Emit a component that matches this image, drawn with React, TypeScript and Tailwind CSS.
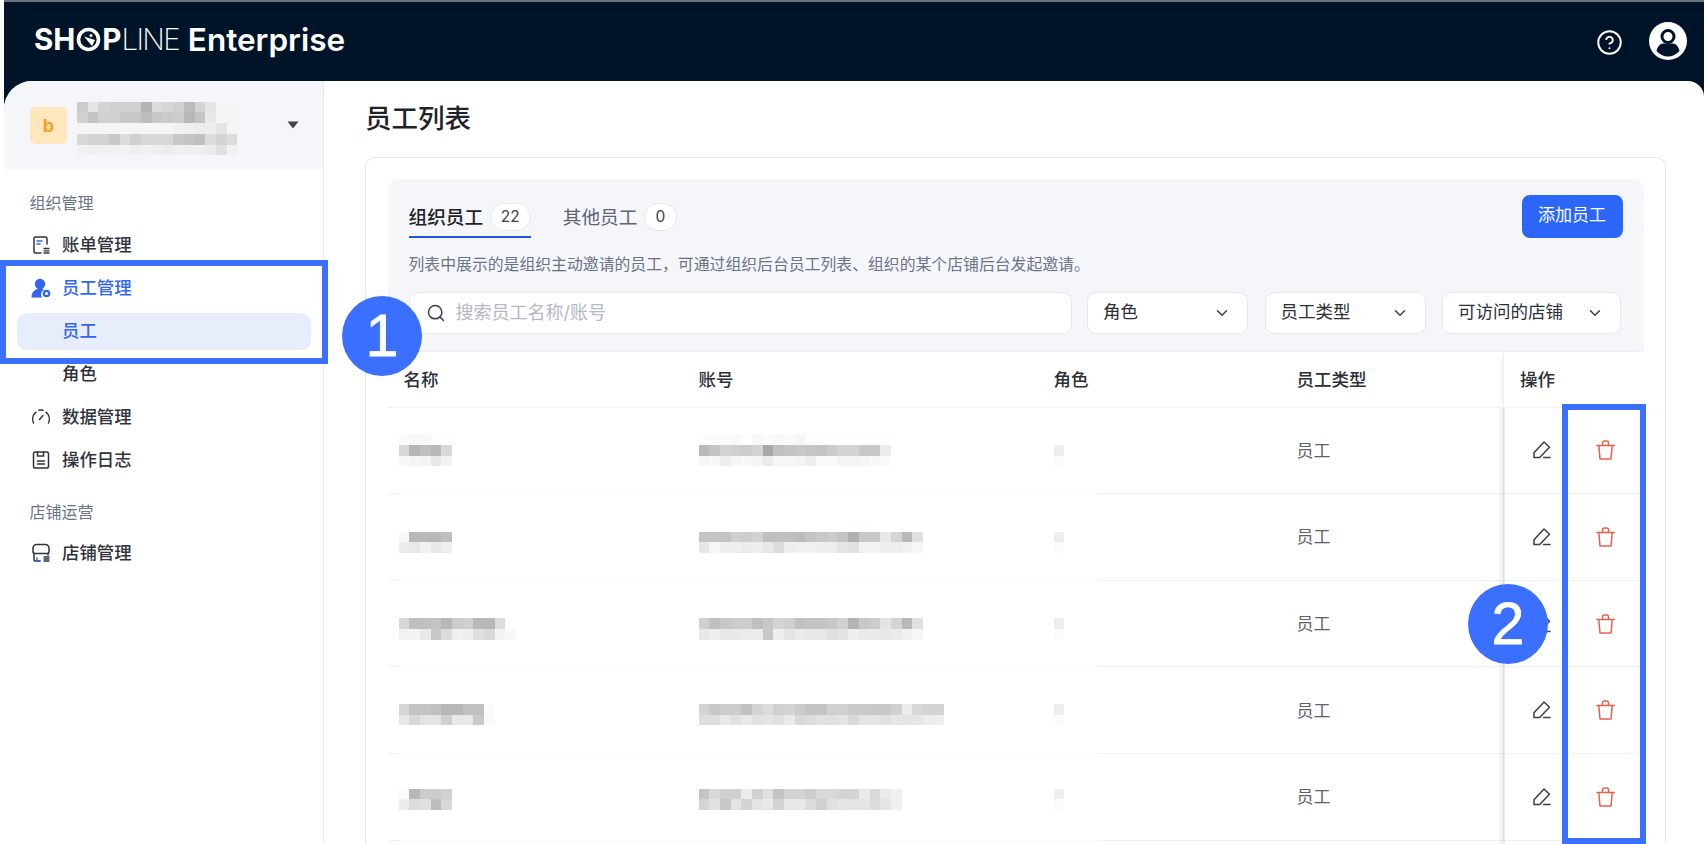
import { ChevronDown, CircleHelp, Search } from "lucide-react";

const people = [
  {
    name: ["fa f8 f8 fd fe", "d8 b5 c0 b8 d8", "f7 f5 f3 e8 f2"],
    account: [
      "fc fb fb f9 fe f8 fb f9 fb f6 fd fe fd fe fe fe fe fe",
      "b8 c4 d2 d0 cc d4 a8 c0 c4 c8 c6 c4 cc d4 d4 c8 c8 ec",
      "f6 f8 ee f6 f8 f4 ec f6 f6 f4 ee fa fa f4 f4 f6 f8 fa",
    ],
    shift: "",
  },
  {
    name: ["ff ff ff ff ff", "f8 b8 b8 b8 c0", "ec e8 f2 e8 ee"],
    account: [
      "ff ff ff ff ff ff ff ff ff ff ff ff ff ff fe fe ff ff ff ff ff",
      "c4 c4 c4 d0 cc d2 c0 c0 c0 bc c4 c8 cc c4 b0 c8 c8 e8 d4 b8 e0",
      "e6 f6 ee ee ec ee e8 dc ee f0 f0 ee ee e4 e0 f2 f2 ee ee f0 f6",
    ],
    shift: "",
  },
  {
    name: ["ff ff ff ff ff ff ff ff ff ff ff", "d8 c0 c0 c4 b8 cc d0 b8 b8 dc ff", "f2 f4 e8 c8 dc f0 ee e0 da f2 f6"],
    account: [
      "ff ff ff ff ff ff ff ff ff ff ff ff ff ff ff ff ff ff ff ff ff",
      "d0 c0 c8 cc cc c0 c8 d4 d0 c0 c4 c4 c8 d0 b4 c8 cc e4 d4 b8 e0",
      "e8 ee e8 e8 ec ec c8 ee e4 ea e8 e8 e0 e2 ee ea ea e8 ea f0 f6",
    ],
    shift: "",
  },
  {
    name: ["ff ff ff ff ff ff ff ff ff", "d6 c4 c4 c0 b8 b8 c0 c0 fa", "e8 d8 e4 e4 d0 e8 e8 c8 fa"],
    account: [
      "ff ff ff ff ff ff ff ff ff ff ff ff ff ff ff ff ff ff ff ff ff ff ff",
      "d4 c8 cc cc c0 d4 dc d0 d4 cc c4 c4 d0 d0 ca ca c8 c8 d0 ec d8 d4 d4",
      "de de e8 e0 e8 e2 e4 e0 ea d8 dc e2 e0 e4 d8 e4 e4 e0 e6 e4 e6 ec ee",
    ],
    shift: "-translate-y-px",
  },
  {
    name: ["ff ff ff ff ff", "fb b8 cc cc d0", "ec dc e0 bc d8"],
    account: [
      "ff ff ff ff ff ff ff ff ff ff ff ff ff ff ff ff ff ff ff",
      "c4 d8 d0 d0 ec d0 e0 c4 d4 d4 cc d8 d8 d4 d4 ea d8 ea f0",
      "d4 e0 c8 e4 d4 e4 e8 d4 e8 e8 dc d0 e0 e6 e4 e4 dc e4 f0",
    ],
    shift: "-translate-y-[3px]",
  },
];

const storeMosaic = [
  "cc e4 d4 d0 d0 d0 b4 dc d6 d0 bc d4 e6 f5 f5",
  "d0 c4 d0 d0 c8 c8 bc c8 ca cc b8 c4 e8 f5 f5",
  "f5 f5 f5 f5 f5 f5 f5 f5 f5 f1 ee ec ee e4 f5",
  "d8 d4 d4 c8 dc d0 d8 d8 d8 c8 c4 c0 dc d4 dc",
  "f1 ef f1 f1 f3 ef f1 ef eb ef ef ef eb e0 f1",
];

function Mosaic({ rows, className = "" }: { rows: string[]; className?: string }) {
  return (
    <div className={`flex flex-col blur-[0.4px] ${className}`}>
      {rows.map((row, i) => (
        <div key={i} className="flex">
          {row.split(" ").map((v, j) => (
            <div key={j} className="w-[10.7px] h-[10.7px]" style={{ background: `#${v}${v}${v}` }} />
          ))}
        </div>
      ))}
    </div>
  );
}

function BillIcon() {
  return (
    <svg width="20" height="20" viewBox="0 0 20 20" fill="none" stroke="#2f333d" strokeWidth="1.5" strokeLinecap="round">
      <path d="M16 9V3.5A1.5 1.5 0 0 0 14.500 2h-10A1.500 1.500 0 0 0 3 3.500v13A1.500 1.500 0 0 0 4.500 18H10" />
      <path d="M6 6h5M6 9h3" stroke="#3366f0" />
      <path d="M13 13.500h5M13 15.800h5M13 18h5" strokeWidth="1.300" />
    </svg>
  );
}

function StaffIcon() {
  return (
    <svg width="20" height="20" viewBox="0 0 20 20" fill="none">
      <circle cx="9" cy="6" r="5.200" fill="#3366f0" />
      <path d="M.5 19.500c0-5.500 3.500-9 8.500-9 1.500 0 3 .4 4 1.200a5 5 0 0 0-1.800 7.800z" fill="#3366f0" />
      <circle cx="15.500" cy="15.500" r="2.700" stroke="#3366f0" strokeWidth="2.200" fill="#fff" />
    </svg>
  );
}

function GaugeIcon() {
  return (
    <svg width="20" height="20" viewBox="0 0 20 20" fill="none" stroke="#2f333d" strokeWidth="1.500" strokeLinecap="round">
      <path d="M2.500 16A9 9 0 0 1 5 5.200M8 3.300a9 9 0 0 1 4 0M15 5.200A9 9 0 0 1 17.500 16" />
      <path d="M8.500 12.500 12 8.500" />
    </svg>
  );
}

function LogIcon() {
  return (
    <svg width="20" height="20" viewBox="0 0 20 20" fill="none" stroke="#2f333d" strokeWidth="1.500" strokeLinecap="round">
      <rect x="2.500" y="2" width="15" height="16" rx="1.800" />
      <path d="M6.500 2v4h6V2" />
      <path d="M6.500 11h7M6.500 14h7" />
    </svg>
  );
}

function StoreIcon() {
  return (
    <svg width="20" height="20" viewBox="0 0 20 20" fill="none" stroke="#2f333d" strokeWidth="1.500" strokeLinecap="round">
      <path d="M5.500 1.500h9a3.500 3.500 0 0 1 3.500 3.500v3.500a2 2 0 0 1-2 2H4a2 2 0 0 1-2-2V5a3.500 3.500 0 0 1 3.500-3.500z" />
      <path d="M3 10.500V17a1 1 0 0 0 1 1h5M17 10.500V12" />
      <path d="M6 15v3h3" stroke="#3366f0" />
      <path d="M13 14h5M13 16h5M13 18h5" strokeWidth="1.300" />
    </svg>
  );
}

function PencilIcon() {
  return (
    <svg width="18" height="18" viewBox="0 0 18 18" fill="none" stroke="#3a3f4b" strokeWidth="1.500" strokeLinejoin="round" strokeLinecap="round">
      <path d="M1 16.500v-4.800L11 1l5.500 5.300-9.800 10.200z" />
      <path d="M10.500 16.500H17" />
    </svg>
  );
}

function TrashIcon() {
  return (
    <svg width="19" height="20" viewBox="0 0 19 20" fill="none" stroke="#e8604c" strokeWidth="1.500" strokeLinejoin="round" strokeLinecap="round">
      <path d="M.8 5.500h17.400" />
      <path d="M2.800 5.500 4 19h11l1.200-13.500" />
      <path d="M6.500 5.500V3a2 2 0 0 1 2-2h2a2 2 0 0 1 2 2v2.500" />
    </svg>
  );
}

function Annotation({ n, className }: { n: string; className: string }) {
  return (
    <div className={`absolute w-[80px] h-[80px] rounded-full bg-[#3a6fff] flex items-center justify-center text-white text-[59px] leading-none [-webkit-text-stroke:0.8px_white] font-['Liberation_Sans',sans-serif] ${className}`}>
      {n}
    </div>
  );
}

function Select({ label, width }: { label: string; width: string }) {
  return (
    <div className={`${width} h-[42px] bg-white border-[1.5px] border-[#e5e7ec] rounded-[9px] flex items-center justify-between pl-[15px] pr-[16px] text-[17.5px] text-[#2b2f38]`}>
      <span>{label}</span>
      <ChevronDown size={18} strokeWidth={2} color="#3a3f4b" />
    </div>
  );
}

function RowLine() {
  return (
    <div className="flex h-px">
      <div className="w-[11px] bg-[#f0f1f3]" />
      <div className="w-[700px] bg-[#fbfbfc]" />
      <div className="flex-1 bg-[#f0f1f3]" />
    </div>
  );
}

function NavRow({ icon, label, active }: { icon?: React.ReactNode; label: string; active?: boolean }) {
  return (
    <div className={`h-[43px] flex items-center pl-[14.5px] text-[17.4px] font-medium ${active ? "text-[#3366f0]" : "text-[#2f333d]"}`}>
      <div className="w-[31px] shrink-0">{icon}</div>
      <span>{label}</span>
    </div>
  );
}

export default function App() {
  return (
    <div className="relative w-[1704px] h-[844px] overflow-hidden bg-white pl-[4px] font-['Inter','Noto_Sans_CJK_SC',sans-serif]">
      <div className="h-full flex flex-col bg-[#001429] border-t-[2px] border-[#6d737c]">
        <header className="h-[79px] shrink-0 flex items-center justify-between">
          <div className="flex items-center ml-[30px] text-white text-[29.5px] font-bold leading-none -mt-[4px]">
            <span>SH</span>
            <svg width="25" height="25" viewBox="0 0 25 25" fill="none" className="mx-[1px]">
              <circle cx="12.500" cy="12.500" r="10" stroke="#fff" strokeWidth="3.600" />
              <path d="M8 9.500 16 19l3-6z" fill="#fff" />
              <circle cx="15" cy="8.500" r="1.500" fill="#fff" />
            </svg>
            <span>P</span>
            <span className="font-extralight tracking-[-1.700px]">LINE</span>
            <span className="ml-[9px] font-semibold text-[31.500px]">Enterprise</span>
          </div>
          <div className="flex items-center mr-[17px] -mt-[1px]">
            <CircleHelp size={27} strokeWidth={1.700} color="#fff" className="mt-[3px]" />
            <svg width="38" height="38" viewBox="0 0 38 38" className="ml-[26px]">
              <circle cx="19" cy="19" r="19" fill="#fff" />
              <circle cx="19" cy="14.500" r="6" fill="none" stroke="#001429" strokeWidth="3" />
              <path d="M7.500 29c1-5 4-7.500 7-7.500h9c3 0 6 2.500 7 7.500-3 3.500-7 5.500-11.500 5.500S10.500 32.500 7.500 29z" fill="#001429" />
            </svg>
          </div>
        </header>

        <div className="flex-1 min-h-0 flex bg-white rounded-tl-[28px] rounded-tr-[16px] overflow-hidden">
          <aside className="w-[320px] shrink-0 border-r border-[#e8e9ed]">
            <div className="h-[88px] bg-[#f5f6fa] flex items-center pl-[26px] pr-[24px]">
              <div className="w-[37px] h-[37px] rounded-[5px] bg-[#ffe7bd] flex items-center justify-center text-[#f5a020] text-[18px] font-bold">b</div>
              <Mosaic rows={storeMosaic} className="ml-[10px] mt-[7px]" />
              <svg width="12" height="8" viewBox="0 0 12 8" className="ml-auto">
                <path d="M.5.500h11L6 7.500z" fill="#3d4352" />
              </svg>
            </div>

            <div className="px-[12.5px] pt-[14px]">
              <div className="h-[40.5px] flex items-center pl-[13px] text-[16px] text-[#6a7386]">组织管理</div>
              <NavRow icon={<BillIcon />} label="账单管理" />
              <NavRow icon={<StaffIcon />} label="员工管理" active />
              <div className="h-[43px] flex items-center">
                <div className="w-full h-[37px] rounded-[9px] bg-[#e8edfc] flex items-center">
                  <NavRow label="员工" active />
                </div>
              </div>
              <NavRow label="角色" />
              <NavRow icon={<GaugeIcon />} label="数据管理" />
              <NavRow icon={<LogIcon />} label="操作日志" />
              <div className="mt-[10px] h-[40px] flex items-center pl-[13px] text-[16px] text-[#6a7386]">店铺运营</div>
              <NavRow icon={<StoreIcon />} label="店铺管理" />
            </div>
          </aside>

          <main className="flex-1 min-w-0 flex flex-col pl-[41px] pr-[38px]">
            <h1 className="h-[76px] shrink-0 flex items-center text-[26.500px] font-medium text-[#1f2329]">员工列表</h1>

            <div className="flex-1 border-[1.5px] border-b-0 border-[#e6e8ec] rounded-t-[10px] px-[21.5px] pt-[20.5px]">
              <div className="h-[173px] bg-[#f5f6fa] rounded-t-[10px] border-b border-[#eef0f3] px-[21px] pt-[16px]">
                <div className="h-[44px] flex justify-between items-start">
                  <div className="flex items-start pt-[8px]">
                    <div className="h-[35.5px] flex items-start gap-[6.5px] border-b-[2.5px] border-[#2255e0] text-[18.700px] font-medium text-[#1f2329]">
                      <span className="leading-[30px]">组织员工</span>
                      <span className="w-[41px] h-[28px] rounded-full bg-white border-[1.5px] border-[#e5e7ec] flex items-center justify-center text-[15.5px] font-normal text-[#3a3f4b]">22</span>
                    </div>
                    <div className="ml-[32px] flex items-start gap-[6.5px] text-[18.700px] text-[#5d6270]">
                      <span className="leading-[30px]">其他员工</span>
                      <span className="w-[33px] h-[28px] rounded-full bg-white border-[1.5px] border-[#e5e7ec] flex items-center justify-center text-[15.5px] text-[#3a3f4b]">0</span>
                    </div>
                  </div>
                  <button className="w-[101px] h-[43px] rounded-[8px] bg-[#2b66f8] text-white text-[17px]">添加员工</button>
                </div>
                <p className="h-[53px] flex items-center text-[15.85px] text-[#6a7386] whitespace-nowrap">列表中展示的是组织主动邀请的员工，可通过组织后台员工列表、组织的某个店铺后台发起邀请。</p>
                <div className="flex">
                  <div className="w-[663px] h-[42px] bg-white border-[1.5px] border-[#e5e7ec] rounded-[9px] flex items-center pl-[16px] text-[18px] text-[#b4b8c2]">
                    <Search size={20} strokeWidth={1.800} color="#3a3f4b" />
                    <span className="ml-[10px]">搜索员工名称/账号</span>
                  </div>
                  <Select label="角色" width="ml-[15.500px] w-[161px]" />
                  <Select label="员工类型" width="ml-[16.500px] w-[161px]" />
                  <Select label="可访问的店铺" width="ml-[16.500px] w-[179px]" />
                </div>
              </div>

              <div className="h-[55px] flex items-center text-[17.500px] font-medium text-[#2b2f38]">
                <div className="w-[311px] pl-[16px] pt-[2px]">名称</div>
                <div className="w-[355px] pt-[2px]">账号</div>
                <div className="w-[243px] pt-[2px]">角色</div>
                <div className="w-[206.500px] pt-[2px]">员工类型</div>
                <div className="flex-1 self-stretch flex items-center pl-[16px] pt-[2px] border-l border-[#eceef1] shadow-[-5px_0_6px_-5px_rgba(0,0,0,0.1)]">操作</div>
              </div>
              <div className="h-px bg-[#eef0f3]" />

              <div className="relative">
                {people.map((p, i) => (
                  <div key={i}>
                    <div className="h-[85.670px] flex items-center">
                      <div className="w-[311px] pl-[11px]">
                        <Mosaic rows={p.name} className={p.shift} />
                      </div>
                      <div className="w-[355px]">
                        <Mosaic rows={p.account} className={p.shift} />
                      </div>
                      <div className="w-[243px]">
                        <Mosaic rows={["ff", "ee", "fb"]} className={p.shift} />
                      </div>
                      <div className="w-[206.500px] pt-[2px] text-[17px] text-[#5d6270]">员工</div>
                      <div className="flex-1 self-stretch flex items-center pl-[5.500px] border-l border-[#eceef1]">
                        <div className="w-[64px] flex justify-center"><PencilIcon /></div>
                        <div className="w-[64px] flex justify-center"><TrashIcon /></div>
                      </div>
                    </div>
                    <RowLine />
                  </div>
                ))}
                <div className="h-[20px]" />
                {/* shadow cast by the fixed action column */}
                <div className="absolute top-0 bottom-0 right-[139px] w-[8px] bg-gradient-to-l from-[rgba(0,0,0,0.09)] to-transparent" />
              </div>
            </div>
          </main>
        </div>
      </div>

      {/* callouts drawn over the page */}
      <div className="absolute left-0 top-[260px] w-[328px] h-[104px] border-[6px] border-[#3a6fff]" />
      <div className="absolute left-[1562px] top-[404px] w-[84px] h-[440px] border-[6px] border-[#3a6fff]" />
      <Annotation n="1" className="left-[342px] top-[296px]" />
      <Annotation n="2" className="left-[1468px] top-[584px]" />
    </div>
  );
}
